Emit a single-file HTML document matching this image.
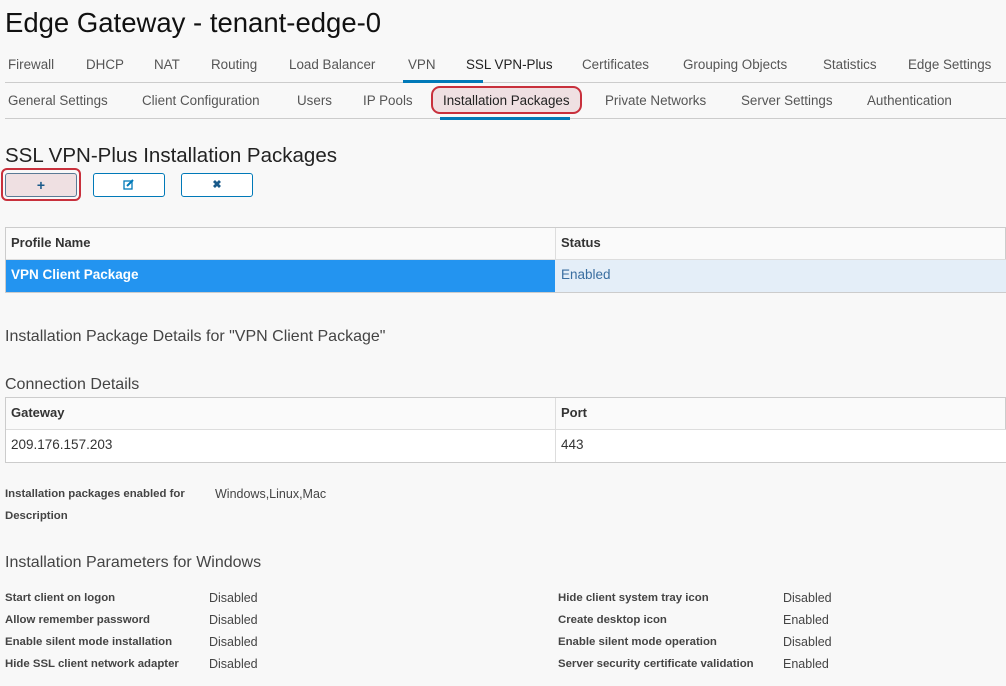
<!DOCTYPE html>
<html><head><style>
*{margin:0;padding:0;box-sizing:border-box}
body{width:1006px;height:686px;background:#f8f8f8;font-family:"Liberation Sans",sans-serif;color:#333;position:relative;overflow:hidden}
.a{position:absolute;white-space:nowrap}
.t{font-size:13.4px;color:#555;line-height:16px}
.h{color:#444}
.lbl{font-size:11.4px;font-weight:bold;color:#444;line-height:14px}
.val{font-size:12.5px;color:#444;line-height:14px}
.line{position:absolute;height:1px;background:#ccc}
.btn{position:absolute;top:173px;width:72px;height:24px;border:1px solid #0079b8;border-radius:3px;background:#fff}
</style></head><body>
<div class="a" style="left:5px;top:7px;font-size:27.5px;color:#111;line-height:32px">Edge Gateway - tenant-edge-0</div>

<div class="a t" style="left:8px;top:57px">Firewall</div>
<div class="a t" style="left:86px;top:57px">DHCP</div>
<div class="a t" style="left:154px;top:57px">NAT</div>
<div class="a t" style="left:211px;top:57px">Routing</div>
<div class="a t" style="left:289px;top:57px">Load Balancer</div>
<div class="a t" style="left:408px;top:57px">VPN</div>
<div class="a t" style="left:466px;top:57px;color:#222">SSL VPN-Plus</div>
<div class="a t" style="left:582px;top:57px">Certificates</div>
<div class="a t" style="left:683px;top:57px">Grouping Objects</div>
<div class="a t" style="left:823px;top:57px">Statistics</div>
<div class="a t" style="left:908px;top:57px">Edge Settings</div>
<div class="line" style="left:5px;top:82px;width:1001px"></div>
<div class="a" style="left:403px;top:80px;width:80px;height:3px;background:#0079b8"></div>

<div class="a t" style="left:8px;top:93px">General Settings</div>
<div class="a t" style="left:142px;top:93px">Client Configuration</div>
<div class="a t" style="left:297px;top:93px">Users</div>
<div class="a t" style="left:363px;top:93px">IP Pools</div>
<div class="a" style="left:431px;top:86px;width:151px;height:28px;border:2px solid #c8303c;border-radius:9px;background:#efe0e2"></div>
<div class="a t" style="left:443px;top:93px;color:#222">Installation Packages</div>
<div class="a t" style="left:605px;top:93px">Private Networks</div>
<div class="a t" style="left:741px;top:93px">Server Settings</div>
<div class="a t" style="left:867px;top:93px">Authentication</div>
<div class="line" style="left:5px;top:118px;width:1001px"></div>
<div class="a" style="left:440px;top:117px;width:130px;height:3px;background:#0079b8"></div>

<div class="a" style="left:5px;top:144px;font-size:20.5px;color:#222;line-height:24px">SSL VPN-Plus Installation Packages</div>

<div class="a" style="left:1px;top:168px;width:80px;height:33px;border:2px solid #c8303c;border-radius:6px"></div>
<div class="btn" style="left:5px;background:#efe0e2;border-color:#5a7a95"><div style="text-align:center;font-weight:bold;color:#1a5a8a;font-size:14px;line-height:22px">+</div></div>
<div class="btn" style="left:93px"><svg width="72" height="22" style="position:absolute;left:-1px;top:0"><rect x="31" y="7" width="8" height="8" fill="none" stroke="#0079b8" stroke-width="1.3"/><path d="M34 12 L40 6" stroke="#0079b8" stroke-width="2"/></svg></div>
<div class="btn" style="left:181px"><div style="text-align:center;font-weight:bold;color:#1a5a8a;font-size:11px;line-height:22px">✖</div></div>

<div class="a" style="left:5px;top:227px;width:1001px;height:66px;border:1px solid #ccc;background:#fafafa"></div>
<div class="a" style="left:6px;top:259px;width:549px;height:33px;background:#2394f0"></div>
<div class="a" style="left:555px;top:259px;width:451px;height:33px;background:#e4eef8"></div>
<div class="a" style="left:555px;top:228px;width:1px;height:31px;background:#ddd"></div>
<div class="line" style="left:6px;top:259px;width:1000px;background:#ddd"></div>
<div class="a" style="left:11px;top:235px;font-size:13px;font-weight:bold;color:#333">Profile Name</div>
<div class="a" style="left:561px;top:235px;font-size:13px;font-weight:bold;color:#333">Status</div>
<div class="a" style="left:11px;top:267px;font-size:13.5px;font-weight:bold;color:#fff">VPN Client Package</div>
<div class="a" style="left:561px;top:267px;font-size:13.5px;color:#3a6ea0">Enabled</div>

<div class="a h" style="left:5px;top:328px;font-size:16px">Installation Package Details for "VPN Client Package"</div>
<div class="a h" style="left:5px;top:376px;font-size:16px">Connection Details</div>

<div class="a" style="left:5px;top:397px;width:1001px;height:66px;border:1px solid #ccc;background:#fafafa"></div>
<div class="a" style="left:6px;top:430px;width:1000px;height:32px;background:#fff"></div>
<div class="line" style="left:6px;top:429px;width:1000px;background:#ddd"></div>
<div class="a" style="left:555px;top:398px;width:1px;height:64px;background:#ddd"></div>
<div class="a" style="left:11px;top:405px;font-size:13px;font-weight:bold;color:#333">Gateway</div>
<div class="a" style="left:561px;top:405px;font-size:13px;font-weight:bold;color:#333">Port</div>
<div class="a" style="left:11px;top:437px;font-size:13.5px;color:#333">209.176.157.203</div>
<div class="a" style="left:561px;top:437px;font-size:13.5px;color:#333">443</div>

<div class="a lbl" style="left:5px;top:487px">Installation packages enabled for</div>
<div class="a val" style="left:215px;top:487px">Windows,Linux,Mac</div>
<div class="a lbl" style="left:5px;top:509px">Description</div>

<div class="a h" style="left:5px;top:554px;font-size:16px">Installation Parameters for Windows</div>

<div class="a lbl" style="left:5px;top:591px">Start client on logon</div><div class="a val" style="left:209px;top:591px">Disabled</div>
<div class="a lbl" style="left:5px;top:613px">Allow remember password</div><div class="a val" style="left:209px;top:613px">Disabled</div>
<div class="a lbl" style="left:5px;top:635px">Enable silent mode installation</div><div class="a val" style="left:209px;top:635px">Disabled</div>
<div class="a lbl" style="left:5px;top:657px">Hide SSL client network adapter</div><div class="a val" style="left:209px;top:657px">Disabled</div>

<div class="a lbl" style="left:558px;top:591px">Hide client system tray icon</div><div class="a val" style="left:783px;top:591px">Disabled</div>
<div class="a lbl" style="left:558px;top:613px">Create desktop icon</div><div class="a val" style="left:783px;top:613px">Enabled</div>
<div class="a lbl" style="left:558px;top:635px">Enable silent mode operation</div><div class="a val" style="left:783px;top:635px">Disabled</div>
<div class="a lbl" style="left:558px;top:657px">Server security certificate validation</div><div class="a val" style="left:783px;top:657px">Enabled</div>
</body></html>
